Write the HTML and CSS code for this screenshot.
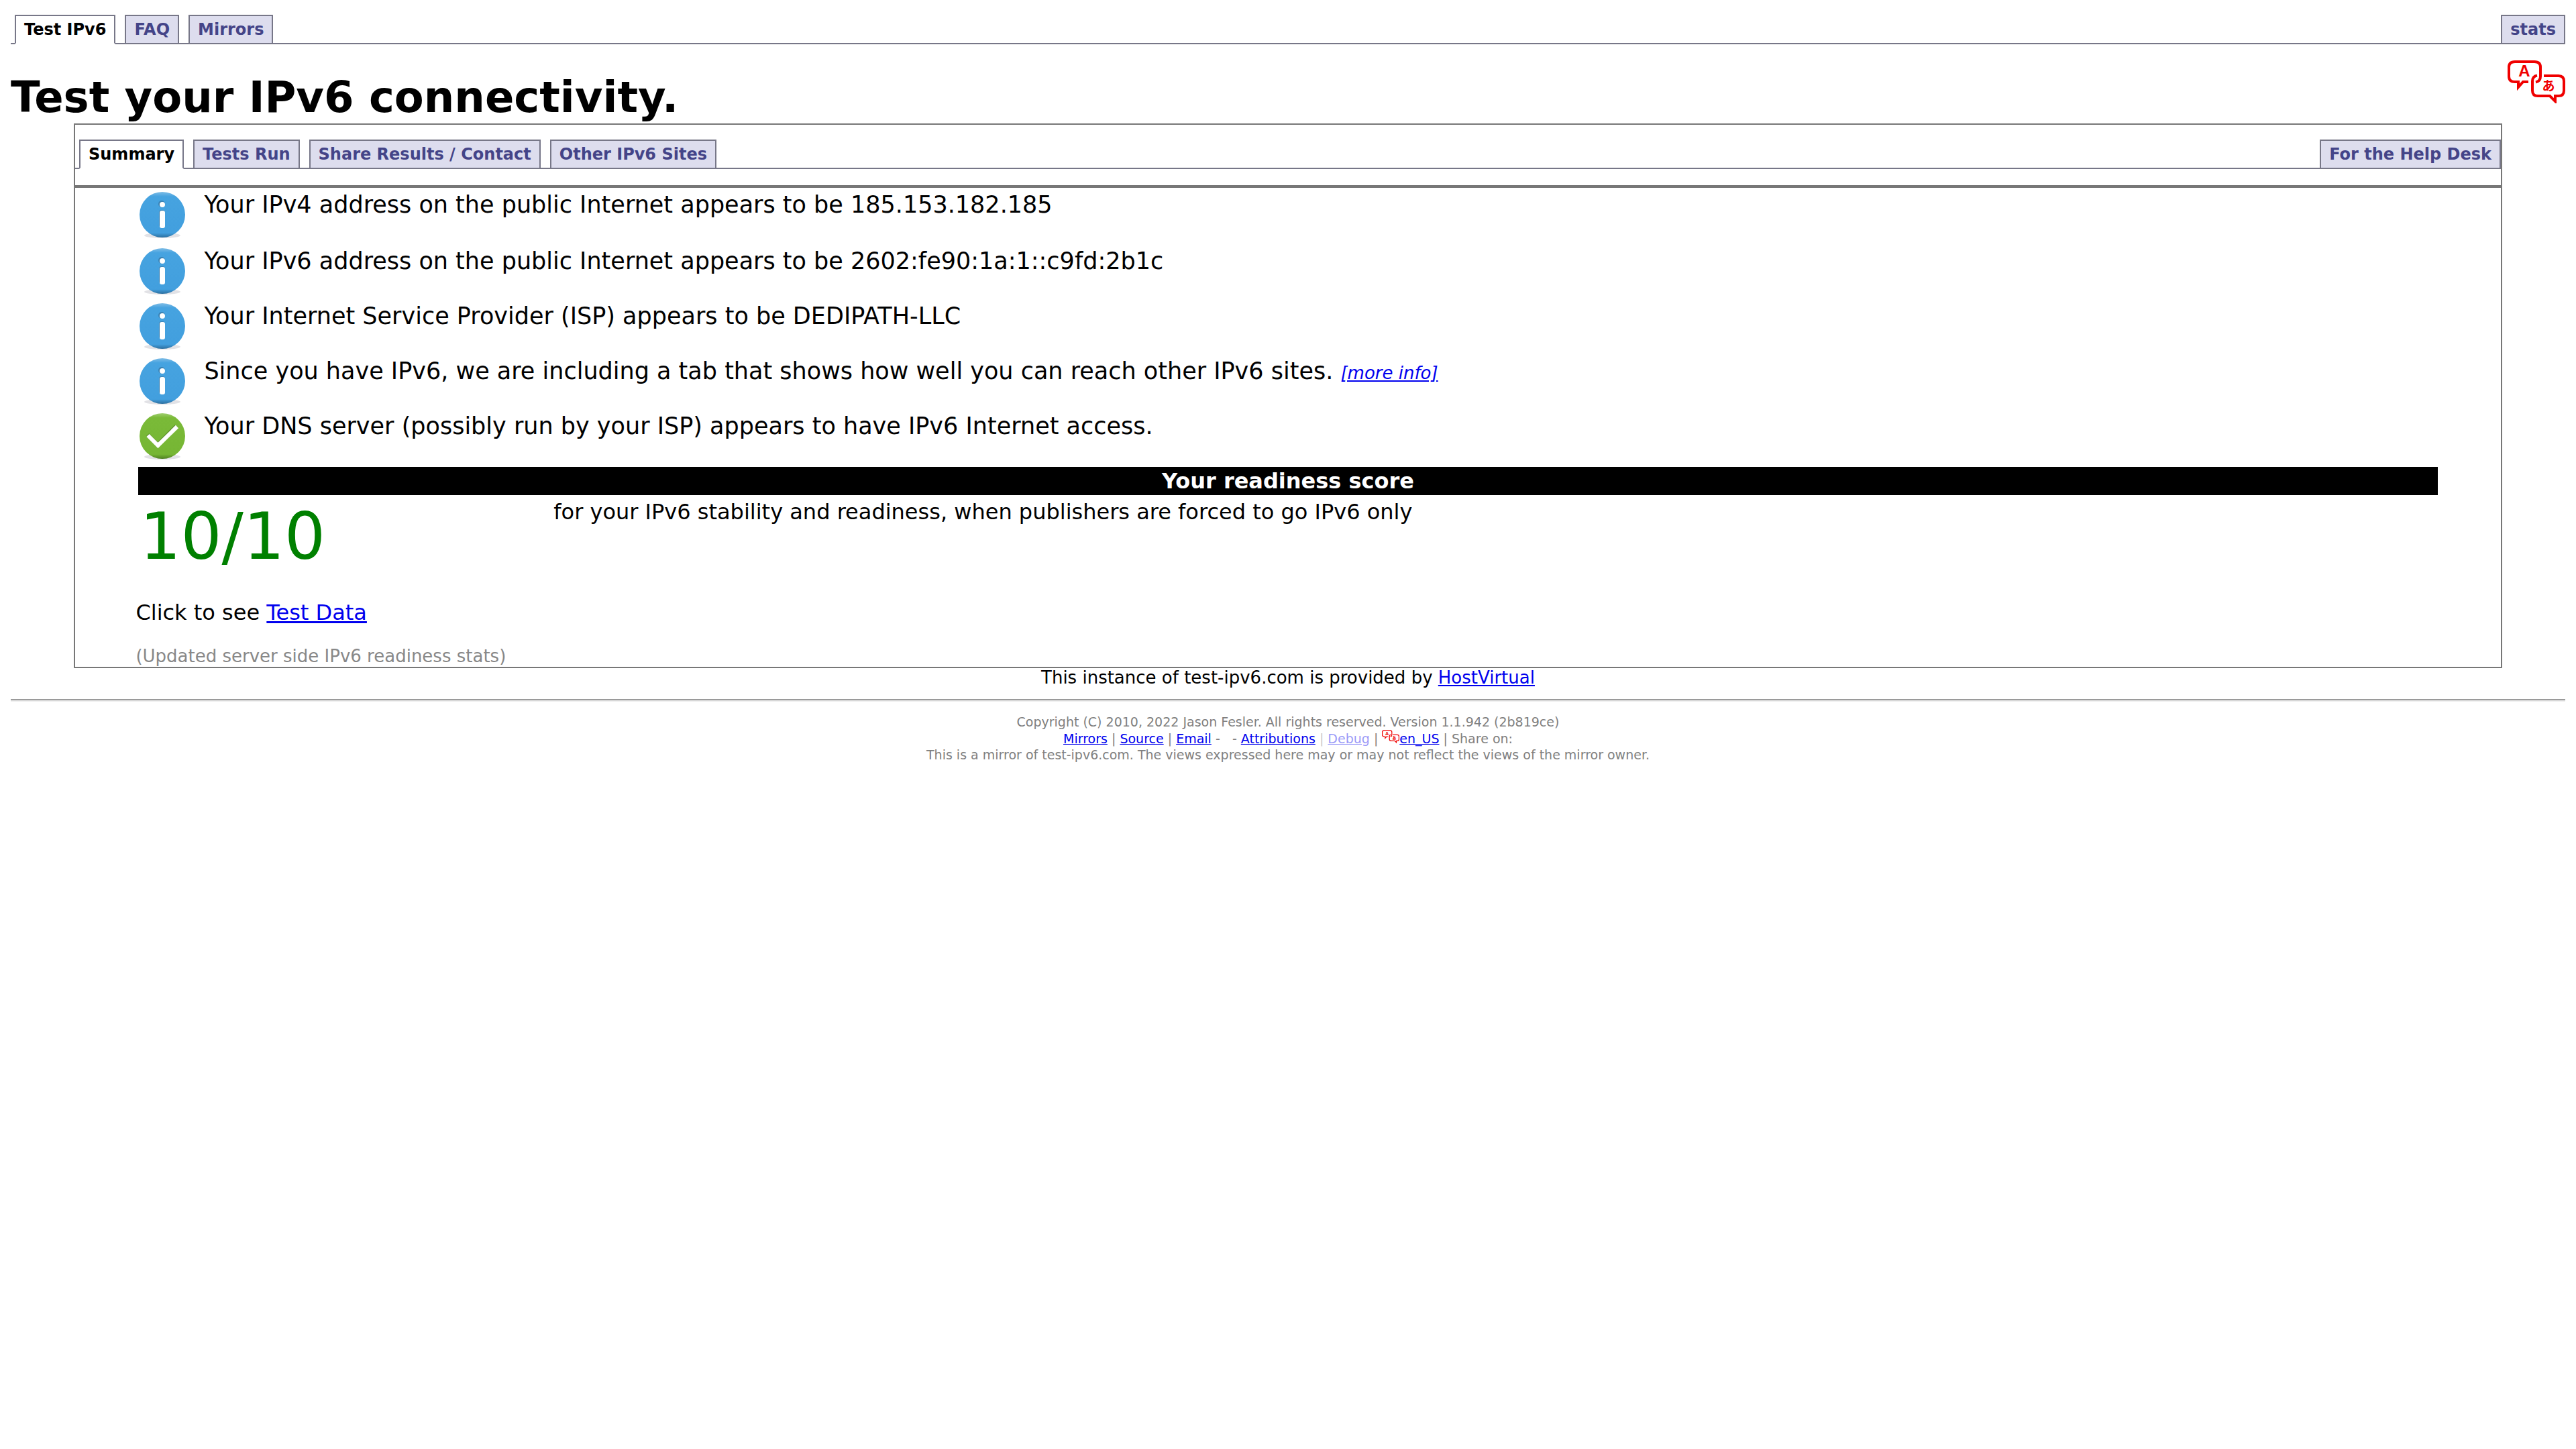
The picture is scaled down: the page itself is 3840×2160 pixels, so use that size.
FILE: index.html
```
<!DOCTYPE html>
<html lang="en">
<head>
<meta charset="utf-8">
<title>Test your IPv6.</title>
<link rel="stylesheet" href="styles.css">
</head>
<body>
<svg class="defs" aria-hidden="true">
  <defs>
    <linearGradient id="blue" x1="0" y1="0" x2="0" y2="1">
      <stop offset="0" stop-color="#7fbde6"/><stop offset=".1" stop-color="#46a3e0"/><stop offset=".9" stop-color="#429fde"/><stop offset="1" stop-color="#2c6f9f"/>
    </linearGradient>
    <linearGradient id="green" x1="0" y1="0" x2="0" y2="1">
      <stop offset="0" stop-color="#9fce70"/><stop offset=".1" stop-color="#7aba38"/><stop offset=".9" stop-color="#76b634"/><stop offset="1" stop-color="#4f8022"/>
    </linearGradient>
    <symbol id="info" viewBox="0 0 72 72">
      <ellipse cx="36" cy="67" rx="27" ry="4" fill="#e2e2e6"/>
      <circle cx="36" cy="36" r="34" fill="url(#blue)"/>
      <circle cx="35" cy="20" r="5" fill="#3a82b4"/>
      <rect x="31" y="29" width="9" height="26" rx="4" fill="#3a82b4"/>
      <circle cx="36" cy="21" r="4" fill="#fff"/>
      <rect x="32" y="30" width="8" height="26" rx="3" fill="#fff"/>
    </symbol>
    <symbol id="ok" viewBox="0 0 72 72">
      <ellipse cx="36" cy="67" rx="27" ry="4" fill="#e2e2e6"/>
      <circle cx="36" cy="36" r="34" fill="url(#green)"/>
      <path d="M14 34 29 49 57 21" fill="none" stroke="#5c8f2c" stroke-width="6"/>
      <path d="M14.500 35 29.500 50 58 22" fill="none" stroke="#fff" stroke-width="6"/>
    </symbol>
    <symbol id="translate" viewBox="0 0 86 64">
      <g fill="none" stroke="#f00000" stroke-width="4">
        <path d="M31 32H23L16 40V32H11Q2 32 2 24V10Q2 2 11 2H40Q49 2 49 10V24Q49 31 42 32.500"/>
        <path d="M54 23H76Q84 23 84 31V45Q84 53 76 53H71V61L63 53H45Q37 53 37 45V31Q37 24 44 22.500"/>
      </g>
      <text class="glyph-latin" x="25" y="24">A</text>
      <text class="glyph-kana" x="61" y="45">あ</text>
    </symbol>
  </defs>
</svg>

<nav class="tabs">
  <a class="tab active" href="#test">Test IPv6</a>
  <a class="tab" href="#faq">FAQ</a>
  <a class="tab" href="#mirrors">Mirrors</a>
  <a class="tab last" href="#stats">stats</a>
</nav>

<header class="heading">
  <h1>Test your IPv6 connectivity.</h1>
  <a href="#locale" aria-label="Language"><svg class="locale"><use href="#translate"/></svg></a>
</header>

<main class="panel">
  <nav class="tabs">
    <a class="tab active" href="#summary">Summary</a>
    <a class="tab" href="#run">Tests Run</a>
    <a class="tab" href="#share">Share Results / Contact</a>
    <a class="tab" href="#sites">Other IPv6 Sites</a>
    <a class="tab last" href="#help">For the Help Desk</a>
  </nav>
  <section class="content">
    <ul class="results">
      <li><svg class="status"><use href="#info"/></svg><span>Your IPv4 address on the public Internet appears to be 185.153.182.185</span></li>
      <li><svg class="status"><use href="#info"/></svg><span>Your IPv6 address on the public Internet appears to be 2602:fe90:1a:1::c9fd:2b1c</span></li>
      <li><svg class="status"><use href="#info"/></svg><span>Your Internet Service Provider (ISP) appears to be DEDIPATH-LLC</span></li>
      <li><svg class="status"><use href="#info"/></svg><span>Since you have IPv6, we are including a tab that shows how well you can reach other IPv6 sites. <a class="more" href="#more">[more info]</a></span></li>
      <li><svg class="status"><use href="#ok"/></svg><span>Your DNS server (possibly run by your ISP) appears to have IPv6 Internet access.</span></li>
    </ul>
    <h2>Your readiness score</h2>
    <div class="score">
      <div class="value">10/10</div>
      <div>for your IPv6 stability and readiness, when publishers are forced to go IPv6 only</div>
    </div>
    <p class="data">Click to see <a href="#data">Test Data</a></p>
    <p class="updated">(Updated server side IPv6 readiness stats)</p>
  </section>
</main>

<p class="host">This instance of test-ipv6.com is provided by <a href="#host">HostVirtual</a></p>
<footer>
  <div>Copyright (C) 2010, 2022 Jason Fesler. All rights reserved. Version 1.1.942 (2b819ce)</div>
  <div><a href="#mirrors">Mirrors</a> | <a href="#source">Source</a> | <a href="#email">Email</a> - &nbsp; - <a href="#attributions">Attributions</a> <span class="faded">| <a href="#debug">Debug</a></span> | <a href="#locale"><svg class="locale-small"><use href="#translate"/></svg>en_US</a> | Share on:</div>
  <div>This is a mirror of test-ipv6.com. The views expressed here may or may not reflect the views of the mirror owner.</div>
</footer>
</body>
</html>
```
FILE: styles.css
```
body {
  margin: 16px;
  background: #fff;
  color: #000;
  font-family: "DejaVu Sans", sans-serif;
  font-size: 32px;
}
h1, h2, p, ul { margin: 0; padding: 0; }
a { color: #0000ee; }
.defs { position: absolute; width: 0; height: 0; }
.glyph-latin, .glyph-kana { fill: #f00000; font-weight: bold; text-anchor: middle; }
.glyph-latin { font-family: "Liberation Sans", sans-serif; font-size: 24px; }
.glyph-kana { font-family: "Noto Sans CJK JP", sans-serif; font-size: 19px; }

.tabs {
  display: flex;
  gap: 14px;
  padding: 6px 0 0 6px;
  font-size: 24px;
  font-weight: bold;
  line-height: 28px;
  box-shadow: inset 0 -2px #777788;
}
.tab {
  padding: 6px 12px;
  border: 2px solid #777788;
  background: #ddddee;
  color: #444488;
  text-decoration: none;
}
.tab.active { background: #fff; border-bottom-color: #fff; color: #000; }
.tab.last { margin-left: auto; }

.heading {
  display: flex;
  justify-content: space-between;
  align-items: flex-start;
  padding-top: 24px;
}
h1 { padding: 18px 0 2px; font-size: 64px; line-height: 74px; }
.locale { display: block; width: 86px; height: 64px; }

.panel { margin: 0 94px; border: 2px solid #777; padding-top: 16px; }
.content {
  margin-top: 24px;
  border-top: 4px solid #777;
  padding: 4px 2.5% 0;
}
.results { list-style: none; margin: 0 4px; font-size: 35px; line-height: 42px; }
.results li { display: flex; gap: 26px; height: 82px; }
.results li:first-child { height: 84px; }
.status { width: 72px; height: 72px; flex: none; }
.more { font-size: 26px; font-style: italic; }
h2 {
  margin: 0 4px;
  background: #000;
  color: #fff;
  font-size: 32px;
  line-height: 42px;
  text-align: center;
}
.score { display: flex; margin: 4px 4px 0; line-height: 42px; }
.value { width: 18%; padding-left: 2px; color: #008000; font-size: 96px; line-height: 116px; }
.data { margin-top: 36px; line-height: 38px; }
.updated { margin-top: 30px; color: #888; font-size: 26px; line-height: 32px; }
.host { font-size: 26px; line-height: 28px; text-align: center; }
footer {
  margin-top: 18px;
  border-top: 2px solid #9a9a9a;
  box-shadow: inset 0 2px #eee;
  padding-top: 20px;
  color: #808080;
  font-size: 19px;
  line-height: 24px;
  text-align: center;
}
.faded { opacity: .4; }
.locale-small { width: 26px; height: 20px; }
```
